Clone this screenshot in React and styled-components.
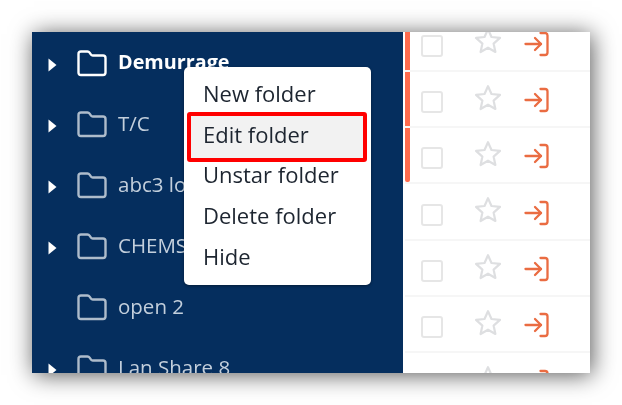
import React from "react";
import styled, { createGlobalStyle } from "styled-components";

const Global = createGlobalStyle`
  html, body { margin: 0; padding: 0; background: #fff; }
  body { width: 622px; height: 405px; overflow: hidden; font-family: "Open Sans", "Liberation Sans", sans-serif; }
`;

const Page = styled.div`
  padding: 32px;
  width: 622px;
  height: 405px;
  box-sizing: border-box;
`;

const Frame = styled.div`
  width: 558px;
  height: 341px;
  display: flex;
  background: #fff;
  box-shadow: 2px 2px 22px rgba(0, 0, 0, 0.66);
`;

const Clip = styled.div`
  flex: 1;
  display: flex;
  min-width: 0;
  overflow: hidden;
  filter: blur(0.55px);
`;

const Sidebar = styled.div`
  position: relative;
  flex: 0 0 371px;
  height: 341px;
  background: #052e5e;
  overflow: hidden;
`;

const Tree = styled.div`
  display: flex;
  flex-direction: column;
  padding-top: 1px;
`;

const TreeRow = styled.div`
  height: 61px;
  display: flex;
  align-items: center;
  flex-shrink: 0;
  padding-left: 16px;
  color: ${(p) => (p.$active ? "#ffffff" : "#c3cfdc")};
  font-size: ${(p) => (p.$active ? "19.8px" : "20.5px")};
  font-weight: ${(p) => (p.$active ? 700 : 400)};
  white-space: nowrap;
`;

const CaretSlot = styled.div`
  width: 29px;
  height: 14px;
  flex-shrink: 0;
  margin-top: 3px;
  svg { display: block; }
`;

const FolderSlot = styled.svg`
  width: 30px;
  height: 27px;
  flex-shrink: 0;
  margin-right: 11px;
`;

const Label = styled.span`
  display: block;
  margin-top: -4px;
`;

const Menu = styled.div`
  position: absolute;
  left: 152px;
  top: 35px;
  width: 187px;
  height: 218px;
  box-sizing: border-box;
  padding-top: 6px;
  background: #fff;
  border-radius: 5px;
  box-shadow: 0 1px 3px rgba(0, 0, 0, 0.4);
  isolation: isolate;
`;

const MenuItem = styled.div`
  height: 40.6px;
  display: flex;
  align-items: center;
  padding-left: 19px;
  color: #1d2530;
  font-size: 22px;
  position: relative;
  &::before {
    content: "";
    display: ${(p) => (p.$selected ? "block" : "none")};
    position: absolute;
    left: 3px;
    right: 4px;
    top: -2px;
    bottom: -8px;
    background: #f2f2f2;
    border: 4px solid #ff0000;
    border-radius: 3px;
    z-index: -1;
  }
`;

const List = styled.div`
  flex: 1;
  min-width: 0;
  display: flex;
  flex-direction: column;
  margin-top: -16.7px;
`;

const Row = styled.div`
  flex: 0 0 56.33px;
  box-sizing: border-box;
  margin-left: 2px;
  display: flex;
  align-items: flex-start;
  position: relative;
  border-bottom: 2px solid #f6f6f6;
`;

const Mark = styled.div`
  width: 5px;
  height: 100%;
  flex-shrink: 0;
  background: ${(p) => (p.$on ? "#ff6b4d" : "transparent")};
  border-radius: ${(p) => (p.$last ? "0 0 2px 2px" : "0")};
`;

const Check = styled.div`
  width: 22px;
  height: 22px;
  box-sizing: border-box;
  margin: 19.5px 0 0 11px;
  border: 2px solid #e6e6e6;
  border-radius: 3px;
  flex-shrink: 0;
`;

const StarIcon = styled.svg`
  width: 28px;
  height: 27px;
  margin: 12px 0 0 31px;
  flex-shrink: 0;
`;

const EnterIcon = styled.svg`
  width: 26px;
  height: 26px;
  margin: 15.5px 0 0 22px;
  flex-shrink: 0;
`;

const Caret = () => (
  <CaretSlot>
    <svg width="9" height="14" viewBox="0 0 9 14">
      <path d="M0.5 0.5 L8.5 7 L0.5 13.5 Z" fill="#fff" />
    </svg>
  </CaretSlot>
);

const Folder = ({ active }) => (
  <FolderSlot viewBox="0 0 30 27" fill="none">
    <path
      d="M1.5 4 Q1.5 1.5 4 1.5 H10.5 Q11.8 1.5 12.6 2.6 L14 4.6 Q14.6 5.5 15.8 5.5 H26 Q28.5 5.5 28.5 8 V22.5 Q28.5 25 26 25 H4 Q1.5 25 1.5 22.5 Z"
      stroke={active ? "#ffffff" : "#aebccb"}
      strokeWidth="2.4"
      strokeLinejoin="round"
    />
  </FolderSlot>
);

const Star = () => (
  <StarIcon viewBox="0 0 28 27" fill="none">
    <path
      d="M14 2.2 L17.5 10 L26 10.9 L19.6 16.6 L21.4 25 L14 20.7 L6.6 25 L8.4 16.6 L2 10.9 L10.5 10 Z"
      stroke="#dedfe1"
      strokeWidth="2.2"
      strokeLinejoin="round"
    />
  </StarIcon>
);

const Enter = () => (
  <EnterIcon viewBox="0 0 26 26" fill="none" stroke="#ea6c42" strokeWidth="2.3" strokeLinecap="round" strokeLinejoin="round">
    <path d="M16.5 2 H21 Q23.5 2 23.5 4.5 V21.5 Q23.5 24 21 24 H16.5" />
    <path d="M1.5 13 H17" />
    <path d="M11 7 L17 13 L11 19" />
  </EnterIcon>
);

const folders = [
  { name: "Demurrage", caret: true, active: true },
  { name: "T/C", caret: true },
  { name: "abc3 lo", caret: true },
  { name: "CHEMS", caret: true },
  { name: "open 2", caret: false },
  { name: "Lan Share 8", caret: true },
];

const menu = ["New folder", "Edit folder", "Unstar folder", "Delete folder", "Hide"];
const rows = [true, true, true, false, false, false, false];

export default function App() {
  return (
    <Page>
      <Global />
      <Frame>
        <Clip>
          <Sidebar>
            <Tree>
              {folders.map((f) => (
                <TreeRow key={f.name} $active={f.active}>
                  {f.caret ? <Caret /> : <CaretSlot />}
                  <Folder active={f.active} />
                  <Label>{f.name}</Label>
                </TreeRow>
              ))}
            </Tree>
            <Menu>
              {menu.map((m) => (
                <MenuItem key={m} $selected={m === "Edit folder"}>
                  {m}
                </MenuItem>
              ))}
            </Menu>
          </Sidebar>
          <List>
            {rows.map((on, i) => (
              <Row key={i}>
                <Mark $on={on} $last={i === 2} />
                <Check />
                <Star />
                <Enter />
              </Row>
            ))}
          </List>
        </Clip>
      </Frame>
    </Page>
  );
}
